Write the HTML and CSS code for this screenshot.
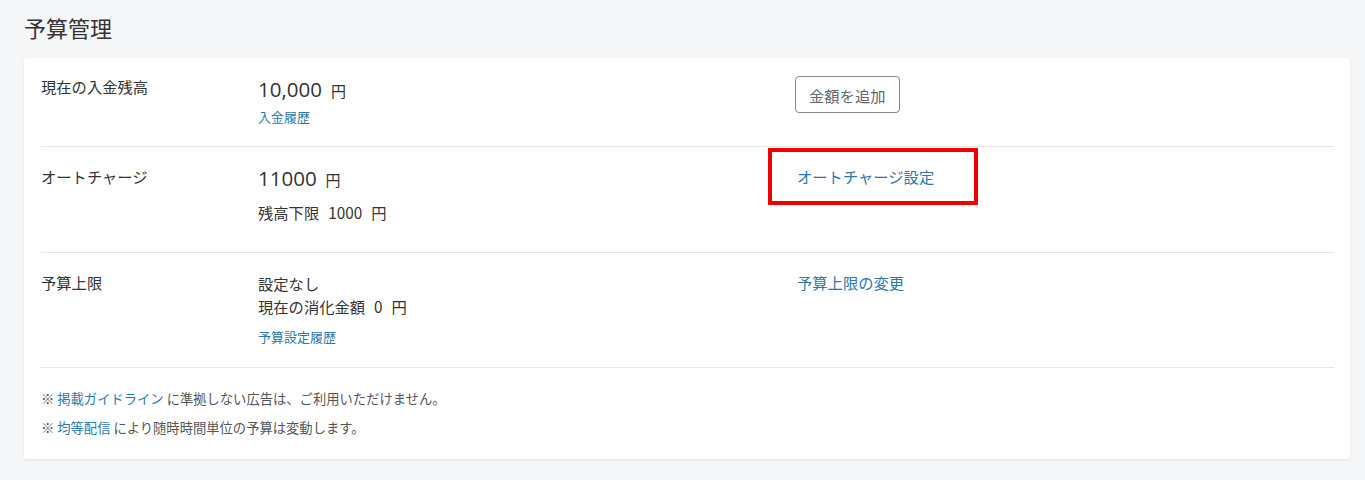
FILE: index.html
```html
<!DOCTYPE html>
<html lang="ja">
<head>
  <meta charset="UTF-8">
  <title>予算管理</title>
  <link rel="stylesheet" href="styles.css">
</head>
<body>

  <h1 class="page-title">予算管理</h1>

  <div class="card">
    <div class="row row-balance">
      <div class="label">現在の入金残高</div>
      <div class="value">
        <div class="amount"><span class="num">10,000</span><span class="yen">円</span></div>
        <a class="link small" href="#">入金履歴</a>
      </div>
      <div class="action">
        <button class="btn">金額を追加</button>
      </div>
    </div>

    <div class="row row-charge">
      <div class="label">オートチャージ</div>
      <div class="value">
        <div class="amount"><span class="num">11000</span><span class="yen">円</span></div>
        <div class="sub">残高下限<span class="gap">1000</span><span class="gap">円</span></div>
      </div>
      <div class="action">
        <span class="highlight"><a class="link" href="#">オートチャージ設定</a></span>
      </div>
    </div>

    <div class="row row-limit">
      <div class="label">予算上限</div>
      <div class="value">
        <div class="line">設定なし</div>
        <div class="line">現在の消化金額<span class="gap">0</span><span class="gap">円</span></div>
        <a class="link small history" href="#">予算設定履歴</a>
      </div>
      <div class="action">
        <a class="link" href="#">予算上限の変更</a>
      </div>
    </div>

    <div class="notes">
      <p>※ <a class="link" href="#">掲載ガイドライン</a> に準拠しない広告は、ご利用いただけません。</p>
      <p>※ <a class="link" href="#">均等配信</a> により随時時間単位の予算は変動します。</p>
    </div>
  </div>

</body>
</html>
```

FILE: styles.css
```css
body {
  margin: 0;
  padding: 12px 15px 20px 24px;
  background: #f5f6f8;
  color: #333;
  font-family: "Noto Sans CJK JP", "Noto Sans", sans-serif;
  font-size: 15.3px;
}

.page-title {
  margin: 0 0 16px;
  font-size: 22px;
  font-weight: normal;
  line-height: 30px;
  color: #333;
}

.card {
  background: #fff;
  border-radius: 3px;
  box-shadow: 0 1px 3px rgba(0,0,0,0.08);
  padding: 0 16px 22px 17px;
}

.row {
  display: grid;
  grid-template-columns: 217px 539px 1fr;
  border-bottom: 1px solid #e6e6e6;
}

.row-balance {
  padding: 18px 0 20px;
  height: 50px;
}

.row-charge {
  padding: 19px 0 0;
  height: 86px;
}

.row-limit {
  padding: 19px 0 0;
  height: 95px;
}

.label {
  line-height: 20px;
}

.amount {
  line-height: 26px;
}

.num {
  font-family: "Open Sans", "Noto Sans", sans-serif;
  font-size: 20.5px;
}

.yen {
  font-size: 15px;
  margin-left: 9px;
}

.gap {
  margin-left: 9px;
}

.row-charge .amount {
  margin-top: -1px;
}

.sub {
  margin-top: 9px;
  line-height: 20px;
}

.line {
  line-height: 23px;
}

.link {
  color: #2b78a8;
  text-decoration: none;
}

.small {
  font-size: 13px;
  line-height: 20px;
  margin-top: 2px;
  display: inline-block;
}

.history {
  margin-top: 9px;
}

.btn {
  height: 37px;
  padding: 0 13px;
  margin-left: -2px;
  background: #fff;
  color: #666;
  border: 1px solid #888;
  border-radius: 4px;
  font-family: inherit;
  font-size: 15.3px;
  cursor: pointer;
}

.action {
  line-height: 20px;
}

.highlight {
  display: inline-block;
  margin: -22px 0 0 -29px;
  padding: 14px 40px 15px 25px;
  border: 4px solid #f00000;
}

.notes {
  padding-top: 22px;
  font-size: 13.3px;
  color: #555;
}

.notes p {
  margin: 0 0 11px;
  line-height: 18px;
}

.notes p:last-child {
  margin-bottom: 0;
}
```
